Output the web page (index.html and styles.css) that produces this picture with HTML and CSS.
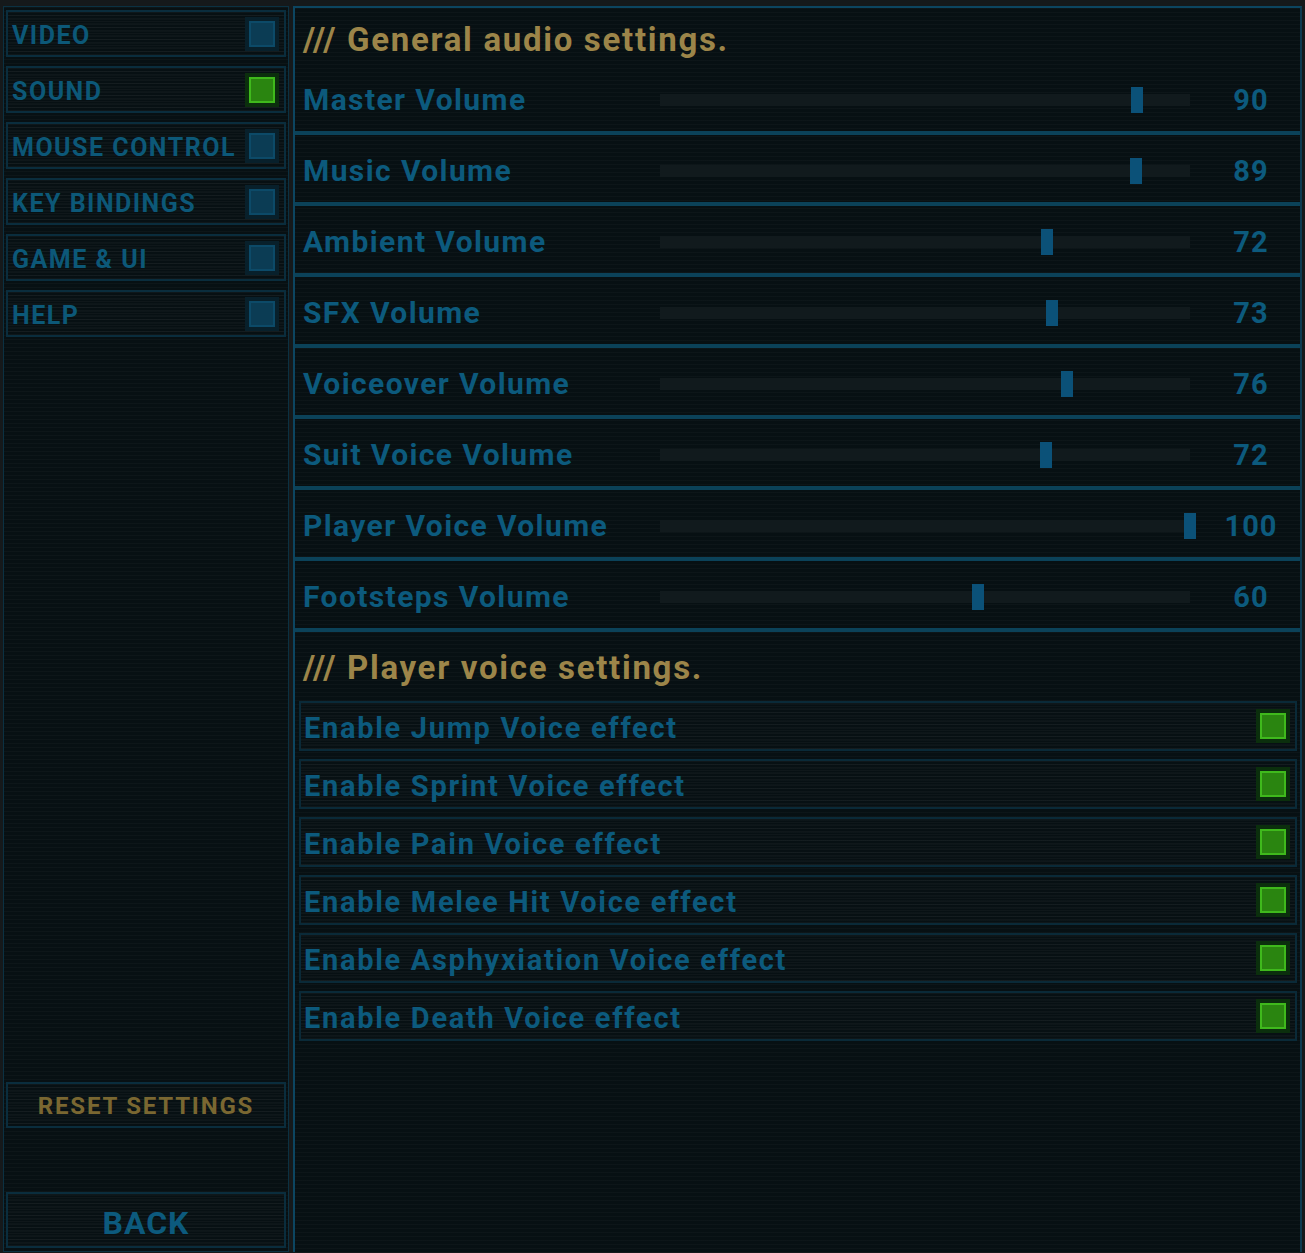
FILE: index.html
```html
<!DOCTYPE html>
<html lang="en">

<head>
    <meta charset="UTF-8">
    <meta name="viewport" content="width=device-width, initial-scale=1.0">
    <title>Options - Sound</title>
    <link rel="stylesheet" href="styles.css">
</head>

<body>

    <div id="screen">

        <!-- Category menu -->
        <div id="sidebar">
            <div class="nav-list">
                <div class="nav-item"><span>VIDEO</span><span class="check"></span></div>
                <div class="nav-item"><span>SOUND</span><span class="check on"></span></div>
                <div class="nav-item"><span>MOUSE CONTROL</span><span class="check"></span></div>
                <div class="nav-item"><span>KEY BINDINGS</span><span class="check"></span></div>
                <div class="nav-item"><span>GAME &amp; UI</span><span class="check"></span></div>
                <div class="nav-item"><span>HELP</span><span class="check"></span></div>
            </div>

            <div class="side-button reset">RESET SETTINGS</div>
            <div class="side-button back">BACK</div>
        </div>

        <!-- Sound settings -->
        <div id="settings">
            <div class="section-title">/// General audio settings.</div>

            <div class="slider-row">
                <div class="label">Master Volume</div>
                <div class="track"><div class="handle" style="left: 90%"></div></div>
                <div class="value">90</div>
            </div>
            <div class="slider-row">
                <div class="label">Music Volume</div>
                <div class="track"><div class="handle" style="left: 89.8%"></div></div>
                <div class="value">89</div>
            </div>
            <div class="slider-row">
                <div class="label">Ambient Volume</div>
                <div class="track"><div class="handle" style="left: 73%"></div></div>
                <div class="value">72</div>
            </div>
            <div class="slider-row">
                <div class="label">SFX Volume</div>
                <div class="track"><div class="handle" style="left: 74%"></div></div>
                <div class="value">73</div>
            </div>
            <div class="slider-row">
                <div class="label">Voiceover Volume</div>
                <div class="track"><div class="handle" style="left: 76.7%"></div></div>
                <div class="value">76</div>
            </div>
            <div class="slider-row">
                <div class="label">Suit Voice Volume</div>
                <div class="track"><div class="handle" style="left: 72.8%"></div></div>
                <div class="value">72</div>
            </div>
            <div class="slider-row">
                <div class="label">Player Voice Volume</div>
                <div class="track"><div class="handle" style="left: 100%"></div></div>
                <div class="value">100</div>
            </div>
            <div class="slider-row">
                <div class="label">Footsteps Volume</div>
                <div class="track"><div class="handle" style="left: 60%"></div></div>
                <div class="value">60</div>
            </div>

            <div class="section-title second">/// Player voice settings.</div>

            <div class="toggle-list">
                <div class="toggle-row"><span>Enable Jump Voice effect</span><span class="check on big"></span></div>
                <div class="toggle-row"><span>Enable Sprint Voice effect</span><span class="check on big"></span></div>
                <div class="toggle-row"><span>Enable Pain Voice effect</span><span class="check on big"></span></div>
                <div class="toggle-row"><span>Enable Melee Hit Voice effect</span><span class="check on big"></span></div>
                <div class="toggle-row"><span>Enable Asphyxiation Voice effect</span><span class="check on big"></span></div>
                <div class="toggle-row"><span>Enable Death Voice effect</span><span class="check on big"></span></div>
            </div>
        </div>

    </div>

</body>

</html>
```

FILE: styles.css
```css
body {
    margin: 0;
    background-color: #15191b;
    font-family: Roboto, "Liberation Sans", sans-serif;
    font-weight: 700;
}

#screen {
    width: 1305px;
    height: 1253px;
    box-sizing: border-box;
    padding: 6px 3px 1px 3px;
    display: flex;
    gap: 4px;
}

/* Left menu */
#sidebar {
    width: 286px;
    box-sizing: border-box;
    border: 1px solid #0b3142;
    padding: 3px 2px 3px 2px;
    display: flex;
    flex-direction: column;
    background-color: #071013;
    background-image: repeating-linear-gradient(to bottom, rgba(255, 255, 255, 0.025) 0 1px, transparent 1px 4px);
}

.nav-list {
    display: flex;
    flex-direction: column;
    gap: 9px;
    flex: 1;
}

.nav-item {
    height: 47px;
    box-sizing: border-box;
    border: 2px solid #0a2d3d;
    padding: 0 9px 0 4px;
    display: flex;
    align-items: center;
    justify-content: space-between;
    color: #0c5878;
    font-size: 25px;
    letter-spacing: 1.5px;
    background-image: repeating-linear-gradient(to bottom, rgba(255, 255, 255, 0.03) 0 1px, transparent 1px 3px);
}

.nav-item span:first-child {
    padding-top: 4px;
}

.check {
    width: 26px;
    height: 26px;
    box-sizing: border-box;
    background-color: #0b3c54;
    border: 2px solid #0c4a68;
    outline: 4px solid #08202b;
}

.check.on {
    background-color: #2a8510;
    border-color: #3fb91c;
    outline-color: #0b2f0d;
}

.check.big {
    margin-right: 9px;
}

.side-button {
    height: 46px;
    box-sizing: border-box;
    border: 2px solid #0a2d3d;
    display: flex;
    align-items: center;
    justify-content: center;
    background-image: repeating-linear-gradient(to bottom, rgba(255, 255, 255, 0.03) 0 1px, transparent 1px 3px);
}

.reset {
    color: #7a6731;
    font-size: 24px;
    letter-spacing: 1.8px;
    padding-top: 2px;
    margin-bottom: 64px;
}

.back {
    height: 56px;
    color: #0c5a7d;
    font-size: 32px;
    letter-spacing: 1px;
    padding-top: 6px;
}

/* Right settings panel */
#settings {
    flex: 1;
    box-sizing: border-box;
    border-left: 2px solid #0c4560;
    border-top: 2px solid #0c4560;
    border-right: 2px solid #0c3a50;
    background-color: #071013;
    background-image: repeating-linear-gradient(to bottom, rgba(255, 255, 255, 0.025) 0 1px, transparent 1px 4px);
}

.section-title {
    height: 56px;
    box-sizing: border-box;
    padding-left: 8px;
    padding-top: 6px;
    display: flex;
    align-items: center;
    color: #9c8549;
    font-size: 33px;
    letter-spacing: 1.7px;
}

.section-title.second {
    height: 69px;
    padding-top: 2px;
}

.slider-row {
    height: 67px;
    border-bottom: 4px solid #0b4259;
    display: flex;
    align-items: center;
    color: #0c5a7d;
}

.slider-row .label {
    width: 357px;
    padding-left: 8px;
    font-size: 30px;
    letter-spacing: 1.4px;
    padding-top: 4px;
}

.track {
    width: 530px;
    height: 12px;
    margin-top: 4px;
    background-color: #111a1d;
    position: relative;
}

.handle {
    position: absolute;
    top: -7px;
    width: 12px;
    height: 26px;
    margin-left: -6px;
    background-color: #0b5178;
}

.slider-row .value {
    flex: 1;
    text-align: center;
    font-size: 29px;
    letter-spacing: 1px;
    padding-top: 4px;
    padding-left: 12px;
}

/* Toggle list */
.toggle-list {
    display: flex;
    flex-direction: column;
    gap: 8px;
    margin: 0 3px 0 4px;
}

.toggle-row {
    height: 50px;
    box-sizing: border-box;
    border: 2px solid #0a2a38;
    padding-left: 3px;
    display: flex;
    align-items: center;
    justify-content: space-between;
    color: #0c5a7d;
    font-size: 29px;
    letter-spacing: 1.7px;
    background-image: repeating-linear-gradient(to bottom, rgba(255, 255, 255, 0.03) 0 1px, transparent 1px 3px);
}

.toggle-row span:first-child {
    padding-top: 4px;
}
```
